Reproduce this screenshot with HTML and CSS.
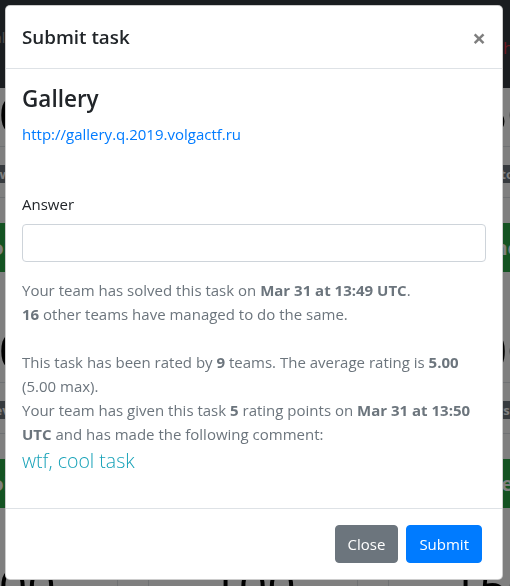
FILE: index.html
```html
<!DOCTYPE html>
<html lang="en">
<head>
<meta charset="utf-8">
<title>Submit task</title>
<link rel="stylesheet" href="styles.css">
</head>
<body>
<div class="page" aria-hidden="true">
  <header class="navbar">
    <span class="nav-left">all</span>
    <span class="nav-right">hello</span>
  </header>
  <main class="board">
    <section class="card"><div class="card-num">100</div><div class="card-mid"><div class="tag">web</div></div><div class="card-foot">Solved</div></section>
    <section class="card"><div class="card-num">100</div><div class="card-mid"><div class="tag"></div></div><div class="card-foot"></div></section>
    <section class="card"><div class="card-num">150</div><div class="card-mid"><div class="tag">crypto</div></div><div class="card-foot">Opened</div></section>
    <section class="card"><div class="card-num">200</div><div class="card-mid"><div class="tag">reverse</div></div><div class="card-foot">Solved</div></section>
    <section class="card"><div class="card-num"></div><div class="card-mid"><div class="tag"></div></div><div class="card-foot"></div></section>
    <section class="card"><div class="card-num">300</div><div class="card-mid"><div class="tag">reverse</div></div><div class="card-foot">Solved</div></section>
    <section class="card"><div class="card-num">100</div><div class="card-mid"><div class="tag">web</div></div><div class="card-foot">Solved</div></section>
    <section class="card"><div class="card-num">100</div><div class="card-mid"><div class="tag"></div></div><div class="card-foot"></div></section>
    <section class="card"><div class="card-num">150</div><div class="card-mid"><div class="tag">web</div></div><div class="card-foot">Solved</div></section>
  </main>
</div>
<div class="backdrop"></div>
<div class="modal-layer">
  <div class="modal">
    <div class="modal-header">
      <h5 class="modal-title">Submit task</h5>
      <button type="button" class="close" aria-label="Close">&times;</button>
    </div>
    <div class="modal-body">
      <h4 class="task-title">Gallery</h4>
      <p class="task-link"><a href="#">http://gallery.q.2019.volgactf.ru</a></p>
      <div class="form-group">
        <label class="label" for="answer">Answer</label>
        <input class="input" id="answer" type="text">
      </div>
      <p class="stat">Your team has solved this task on <b>Mar 31 at 13:49 UTC</b>.</p>
      <p class="stat stat-gap"><b>16</b> other teams have managed to do the same.</p>
      <p class="stat">This task has been rated by <b>9</b> teams. The average rating is <b>5.00</b> (5.00 max).</p>
      <p class="stat">Your team has given this task <b>5</b> rating points on <b>Mar 31 at 13:50 UTC</b> and has made the following comment:</p>
      <p class="comment">wtf, cool task</p>
    </div>
    <div class="modal-footer">
      <button type="button" class="btn btn-secondary">Close</button>
      <button type="button" class="btn btn-primary">Submit</button>
    </div>
  </div>
</div>
</body>
</html>
```
FILE: styles.css
```css
html, body {
  margin: 0;
  padding: 0;
}

body {
  width: 510px;
  height: 586px;
  overflow: hidden;
  font-family: "Open Sans", "Noto Sans", sans-serif;
  font-size: 15px;
  line-height: 24px;
  color: #212529;
}

/* underlying page */
.page {
  height: 586px;
  overflow: hidden;
  background: #fff;
}

.navbar {
  height: 88px;
  background: #343a40;
  display: flex;
  justify-content: space-between;
  align-items: flex-start;
  overflow: hidden;
  font-size: 14px;
}

.nav-left {
  padding-top: 26px;
  color: rgba(255, 255, 255, 0.5);
  margin-left: -6px;
}

.nav-right {
  padding-top: 36px;
  width: 7px;
  white-space: nowrap;
  color: #dc3545;
  font-size: 17px;
}

.board {
  display: grid;
  grid-template-columns: repeat(3, 210px);
  column-gap: 30px;
  margin-left: -92px;
}

.card {
  height: 236px;
  box-sizing: border-box;
  border-left: 1px solid #dee2e6;
  border-right: 1px solid #dee2e6;
  display: flex;
  flex-direction: column;
  text-align: center;
}

.card-num {
  height: 58px;
  border-bottom: 1px solid #dee2e6;
  font-size: 50px;
  line-height: 52px;
  color: #000;
  overflow: hidden;
}

.card-mid {
  padding: 18px 0 14px;
  border-bottom: 1px solid #dee2e6;
}

.tag {
  height: 18px;
  background: #6c757d;
  color: #fff;
  font-size: 13px;
  font-weight: 700;
  line-height: 18px;
}

.card-foot {
  margin-top: 25px;
  height: 49px;
  background: #28a745;
  color: #fff;
  font-size: 20px;
  font-weight: 700;
  line-height: 49px;
}

.backdrop {
  position: fixed;
  inset: 0;
  background: rgba(0, 0, 0, 0.5);
}

/* modal */
.modal-layer {
  position: fixed;
  inset: 0;
  padding: 5px 7px 0 5px;
}

.modal {
  background: #fff;
  border: 1px solid rgba(0, 0, 0, 0.2);
  border-radius: 5px;
  overflow: hidden;
}

.modal-header {
  display: flex;
  align-items: flex-start;
  padding: 16px;
  border-bottom: 1px solid #dee2e6;
}

.modal-title {
  margin: 0;
  font-size: 18.8px;
  font-weight: 600;
  line-height: 30px;
  color: #212529;
}

.close {
  margin: -16px -16px -16px auto;
  padding: 17px 16px 15px;
  background: transparent;
  border: 0;
  font-family: inherit;
  font-size: 24px;
  font-weight: 700;
  line-height: 30px;
  color: #000;
  opacity: 0.5;
  text-shadow: 0 1px 0 #fff;
}

.modal-body {
  padding: 16px;
}

.task-title {
  margin: 0 0 8px;
  font-size: 22.5px;
  font-weight: 600;
  line-height: 28.8px;
  color: #212529;
}

.task-link {
  margin: 0 0 46px;
}

.task-link a {
  color: #007bff;
  text-decoration: none;
}

.form-group {
  margin-bottom: 16px;
}

.label {
  display: block;
  margin-bottom: 8px;
}

.input {
  display: block;
  width: 100%;
  height: 38px;
  box-sizing: border-box;
  border: 1px solid #ced4da;
  border-radius: 4px;
  background: #fff;
}

.stat {
  margin: 0;
  color: #6c757d;
}

.stat b {
  font-weight: 700;
}

.stat-gap {
  margin-bottom: 24px;
}

.comment {
  margin: 0 0 16px;
  font-size: 19.5px;
  font-weight: 300;
  line-height: 30px;
  color: #17a2b8;
}

.modal-footer {
  display: flex;
  justify-content: flex-end;
  gap: 8px;
  padding: 16px 20px 16px 16px;
  border-top: 1px solid #dee2e6;
}

.btn {
  font-family: inherit;
  font-size: 15px;
  line-height: 24px;
  padding: 6px 12px;
  border: 1px solid transparent;
  border-radius: 4px;
  color: #fff;
}

.btn-secondary {
  background: #6c757d;
  border-color: #6c757d;
}

.btn-primary {
  background: #007bff;
  border-color: #007bff;
}
```
